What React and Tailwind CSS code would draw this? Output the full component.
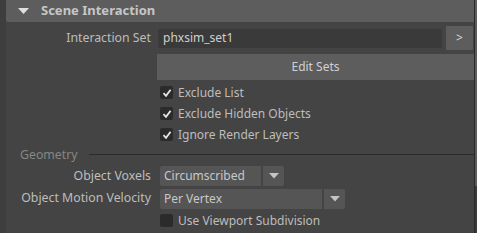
const font = { fontFamily: '"Noto Sans", "Open Sans", sans-serif' };

function Check({ checked }) {
  return (
    <div className="w-[13px] h-[13px] bg-[#2b2b2b] rounded-[2px] flex items-center justify-center">
      {checked && (
        <svg width="10" height="10" viewBox="0 0 10 10">
          <path d="M1.5 5.2 L4 7.8 L8.6 1.8" fill="none" stroke="#e6e6e6" strokeWidth="1.8" />
        </svg>
      )}
    </div>
  );
}

function CheckRow({ label, checked }) {
  return (
    <div className="h-[21px] flex items-center pl-[154px] gap-[5px]">
      <Check checked={checked} />
      <span className="text-[12px] text-[#bdbdbd]">{label}</span>
    </div>
  );
}

function Arrow() {
  return (
    <svg width="10" height="6" viewBox="0 0 10 6">
      <path d="M0 0 H10 L5 5.5 Z" fill="#c4c4c4" />
    </svg>
  );
}

function Dropdown({ value, width }) {
  return (
    <div className="flex gap-[2px] h-[20px]">
      <div className={`${width} bg-[#555555] rounded-l-[2px] flex items-center pl-[4px] text-[12px] text-[#c8c8c8]`}>{value}</div>
      <div className="w-[21px] bg-[#555555] rounded-r-[2px] flex items-center justify-center">
        <Arrow />
      </div>
    </div>
  );
}

function Label({ children }) {
  return <div className="w-[145px] text-right text-[12.3px] text-[#bdbdbd] shrink-0 whitespace-nowrap">{children}</div>;
}

export default function App() {
  return (
    <div className="w-[477px] h-[233px] flex bg-[#404040] overflow-hidden" style={font}>
      <div className="w-[6px] bg-[#3e3e3e]" />
      <div className="flex-1 flex flex-col bg-[#444444]">
        <div className="h-[22px] bg-[#5d5d5d] rounded-bl-[2px] flex items-center shrink-0">
          <div className="w-[35px] flex justify-center">
            <svg width="11" height="6" viewBox="0 0 11 6">
              <path d="M0 0 H11 L5.5 6 Z" fill="#e0e0e0" />
            </svg>
          </div>
          <span className="text-[13px] font-bold text-[#c6c6c6]">Scene Interaction</span>
        </div>

        <div className="h-[24px] mt-[4px] flex items-center shrink-0">
          <Label>Interaction Set</Label>
          <div className="flex items-center gap-[4px] flex-1 ml-[7px] mr-[1px]">
            <div className="flex-1 h-[19px] bg-[#3a3a3a] rounded-[2px] flex items-center pl-[5px] text-[12px] text-[#d0d0d0]">phxsim_set1</div>
            <div className="w-[27px] h-[24px] bg-[#5d5d5d] rounded-[1px] flex items-center justify-center text-[12px] text-[#d8d8d8]">&gt;</div>
          </div>
        </div>

        <div className="pl-[151px] mt-[4px] shrink-0">
          <div className="h-[26px] bg-[#5d5d5d] flex items-center justify-center text-[12px] text-[#d0d0d0]">Edit Sets</div>
        </div>

        <div className="pt-[2px]">
          <CheckRow label="Exclude List" checked />
          <CheckRow label="Exclude Hidden Objects" checked />
          <CheckRow label="Ignore Render Layers" checked />
        </div>

        <div className="h-[20px] flex items-center pl-[14px]">
          <span className="text-[12.3px] text-[#868686]">Geometry</span>
          <div className="flex-1 ml-[11px] mb-[2px] border-t border-[#2b2b2b]" />
        </div>

        <div className="h-[22px] flex items-center">
          <Label>Object Voxels</Label>
          <div className="ml-[9px]">
            <Dropdown value="Circumscribed" width="w-[101px]" />
          </div>
        </div>
        <div className="h-[23px] flex items-center">
          <Label>Object Motion Velocity</Label>
          <div className="ml-[9px]">
            <Dropdown value="Per Vertex" width="w-[162px]" />
          </div>
        </div>
        <CheckRow label="Use Viewport Subdivision" />
      </div>
      <div className="w-[1px] bg-[#2a2a2a]" />
      <div className="w-[2px] flex flex-col">
        <div className="h-[186px] bg-[#5c5c5c]" />
        <div className="flex-1 bg-[#3a3a3a]" />
      </div>
    </div>
  );
}
